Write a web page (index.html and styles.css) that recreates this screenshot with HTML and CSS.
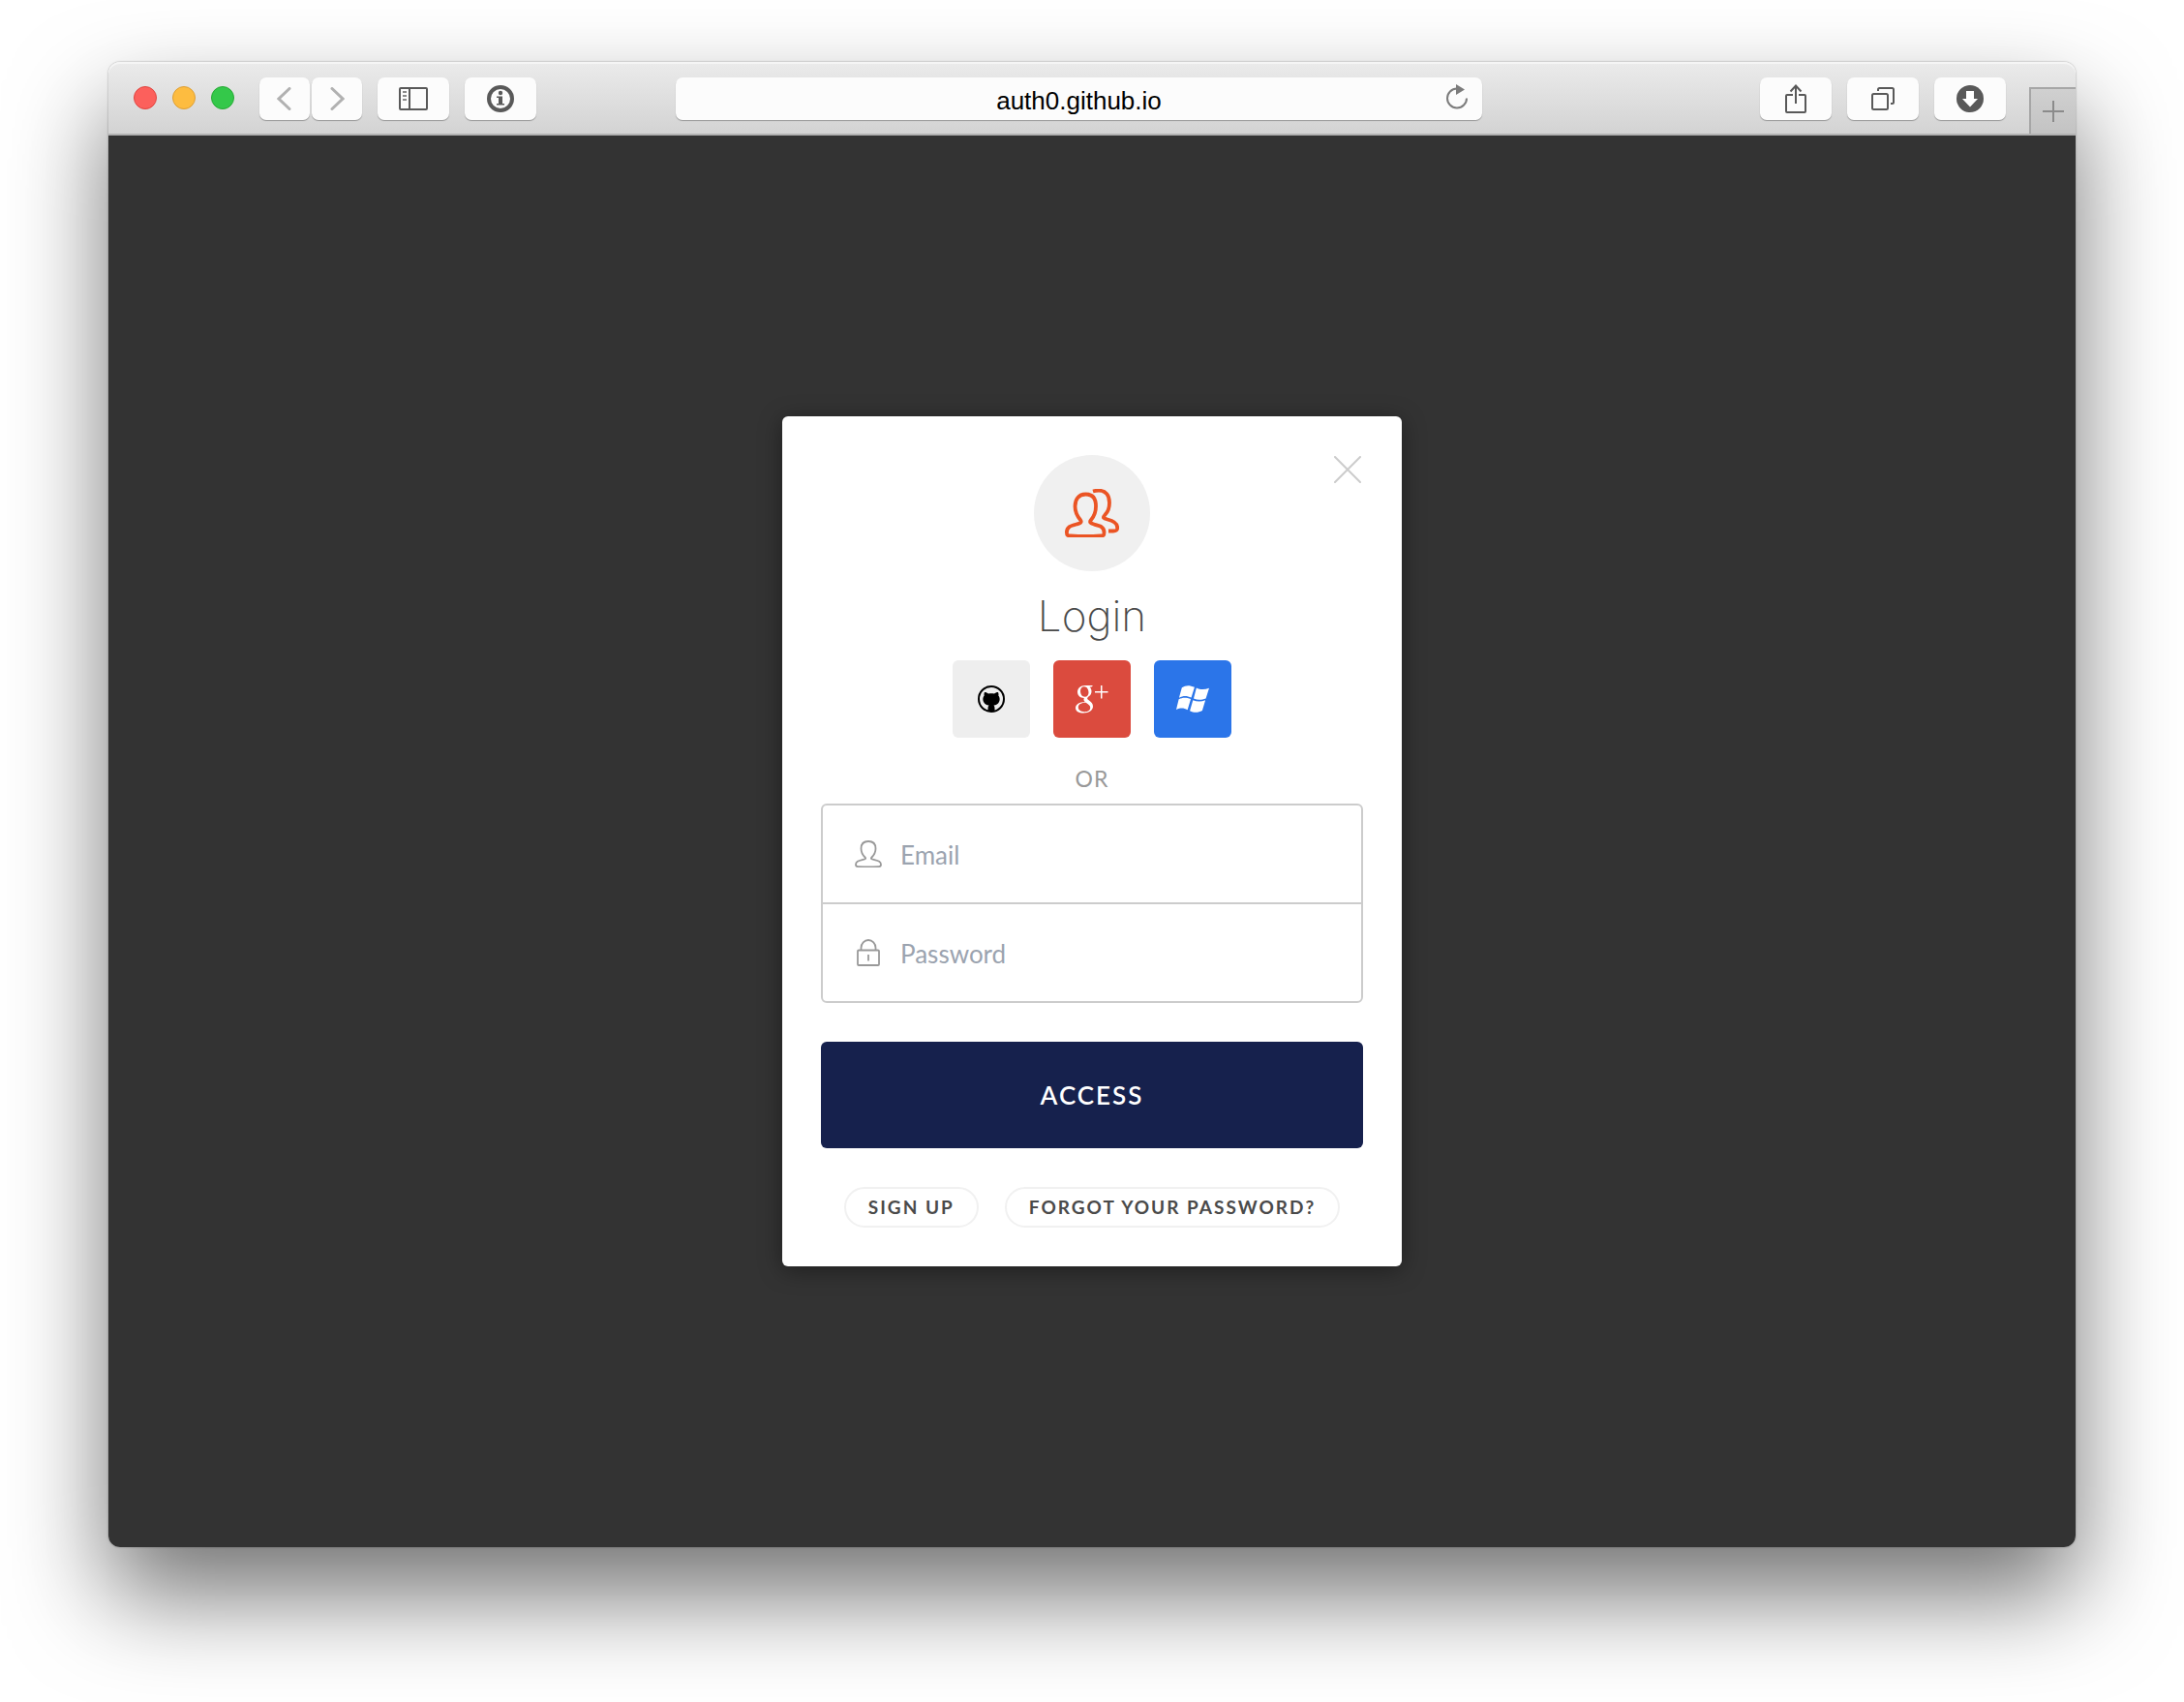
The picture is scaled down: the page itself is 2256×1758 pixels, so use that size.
FILE: index.html
```html
<!DOCTYPE html>
<html lang="en">
<head>
    <meta charset="UTF-8">
    <meta name="viewport" content="width=device-width, initial-scale=1.0">
    <title>Login</title>
    <link rel="stylesheet" href="styles.css">
</head>
<body>
    <div class="window">
        <header class="toolbar">
            <div class="lights">
                <span class="light red"></span>
                <span class="light yellow"></span>
                <span class="light green"></span>
            </div>
            <div class="nav">
                <button class="tool small" type="button" aria-label="Back">
                    <svg width="16" height="24" viewBox="0 0 16 24"><path d="M13 1.500L2 12l11 10.500" fill="none" stroke="#b1b1b1" stroke-width="3" stroke-linecap="round"/></svg>
                </button>
                <button class="tool small" type="button" aria-label="Forward">
                    <svg width="16" height="24" viewBox="0 0 16 24"><path d="M3 1.500L14 12 3 22.500" fill="none" stroke="#b1b1b1" stroke-width="3" stroke-linecap="round"/></svg>
                </button>
            </div>
            <button class="tool" type="button" aria-label="Show sidebar">
                <svg width="30" height="24" viewBox="0 0 30 24" fill="none" stroke="#595959" stroke-width="2"><rect x="1" y="1" width="28" height="22" rx="1"/><path d="M11 1v22"/><path d="M4 5h4M4 9h4M4 13h4" stroke="#8a8a8a"/></svg>
            </button>
            <button class="tool" type="button" aria-label="Info">
                <svg width="28" height="28" viewBox="0 0 28 28"><circle cx="14" cy="14" r="12" fill="none" stroke="#595959" stroke-width="4"/><circle cx="14" cy="8" r="2.200" fill="#595959"/><path d="M10 11.500h6v7.500h2v1.500h-8V19h2v-6h-2z" fill="#595959"/></svg>
            </button>
            <div class="address">
                <input type="text" value="auth0.github.io" aria-label="Address">
                <button class="reload" type="button" aria-label="Reload">
                    <svg width="24" height="28" viewBox="0 0 24 28"><path d="M22 15.500a10 10 0 1 1-10-10" fill="none" stroke="#7c7c7c" stroke-width="2"/><path d="M11 1l9 5.500-9 5.500z" fill="#7c7c7c"/></svg>
                </button>
            </div>
            <button class="tool" type="button" aria-label="Share">
                <svg width="22" height="30" viewBox="0 0 22 30" fill="none" stroke="#595959" stroke-width="2"><path d="M8 11H2a1 1 0 0 0-1 1v16a1 1 0 0 0 1 1h18a1 1 0 0 0 1-1V12a1 1 0 0 0-1-1h-6M11 20V2M5.500 7.500L11 1.500l5.500 6"/></svg>
            </button>
            <button class="tool" type="button" aria-label="Show tabs">
                <svg width="24" height="24" viewBox="0 0 24 24" fill="none" stroke="#595959" stroke-width="2"><rect x="1" y="7" width="16" height="16" rx="1.500"/><path d="M7 4V2.500A1.500 1.500 0 0 1 8.500 1h13A1.500 1.500 0 0 1 23 2.500v13a1.500 1.500 0 0 1-1.500 1.500H20"/></svg>
            </button>
            <button class="tool" type="button" aria-label="Downloads">
                <svg width="28" height="28" viewBox="0 0 28 28"><circle cx="14" cy="14" r="14" fill="#595959"/><path d="M10 6h8v8h4l-8 8.500L6 14h4z" fill="#fff"/></svg>
            </button>
            <button class="new-tab" type="button" aria-label="New tab">
                <svg width="22" height="22" viewBox="0 0 22 22"><path d="M11 0v22M0 11h22" stroke="#8b8b8b" stroke-width="2"/></svg>
            </button>
        </header>

        <main class="page">
            <form class="card">
                <button class="close" type="button" aria-label="Close">
                    <svg width="28" height="28" viewBox="0 0 28 28"><path d="M1 1l26 26M27 1L1 27" stroke="#ccc" stroke-width="2" stroke-linecap="round"/></svg>
                </button>
                <div class="avatar">
                    <svg width="56" height="50" viewBox="0 0 56 50" fill="none" stroke="#eb5424" stroke-width="3.800">
                        <path d="M21.500 5.500C14 5.500 10.500 11 10.500 18c0 7 3 11 5.500 14 2 3-.5 3.500-4 4.500C6 38 1.900 39 1.900 45c0 3 .8 3.300 4 3.500 9 .6 22 .6 31 0 3-.2 3.600-.5 3.600-3.500 0-6-4.300-7-10.500-8.500-3.500-1-5-2-3-4.500 3-3.500 5-7.500 5-14 0-8-3.200-12.500-10.500-12.500z"/>
                        <path d="M29 2.500c2-.6 3.500-.8 6-.8 7.500 0 11 5 11 12.500 0 6-2 10-4.500 12.500-3 3.300-1.500 3.800 2.500 4.800 6 1.500 10.200 3.500 10.200 8.500 0 3-.8 3.500-4.200 3.500h-5"/>
                    </svg>
                </div>
                <h1>Login</h1>
                <div class="social">
                    <button class="github" type="button" aria-label="GitHub">
                        <svg width="28" height="28" viewBox="0 0 28 28"><circle cx="14" cy="14" r="13" fill="none" stroke="#000" stroke-width="2"/><path d="M7 7c1.500 0 3 .6 4 1.500 2-.4 4-.4 6 0 1-.9 2.500-1.500 4-1.500.6 1.300.6 2.600.3 3.600 1.700 2 1.600 4.400.7 6.400-1 2.200-3 3.200-5.500 3.500.8.900 1 2 1 3.500V27h-7v-3c0-1.500.2-2.600 1-3.500-2.500-.3-4.500-1.300-5.500-3.500-.9-2-1-4.400.7-6.400C6.400 9.600 6.400 8.300 7 7z"/></svg>
                    </button>
                    <button class="google" type="button" aria-label="Google+">
                        <svg width="34" height="30" viewBox="0 0 34 30" fill="#fff"><path fill-rule="evenodd" d="M18 1h-8C5 1 2 4 2 7.800 2 11.500 4.800 14 8.800 14c-.7 1.800-.2 2.900 1 4C4 18.200 0 20.500 0 24.200 0 27.500 3.500 29.500 8.200 29.500c6 0 9.800-3 9.800-6.700 0-2.800-1.500-4.300-3.700-6-2.800-2-2.700-2.800-.5-4.500C15.700 10.800 16.500 9.300 16.500 7c0-1.900-.8-3.600-2-4.600h2zM9 2.200c2.800 0 4.500 3 4.500 6 0 2.600-1.400 4.500-3.800 4.500-3 0-4.700-3-4.700-6 0-2.600 1.500-4.500 4-4.500zM10.700 18.800c3.300 2.200 4.500 3.200 4.500 5.200 0 2.500-2.200 4.200-5.800 4.200-4 0-6.600-1.800-6.600-4.600 0-3.300 3.400-4.800 7.900-4.800z"/><path d="M20 7h6V1h1.500v6h6v1.500h-6v6H26v-6h-6z"/></svg>
                    </button>
                    <button class="windows" type="button" aria-label="Windows Live">
                        <svg width="34" height="30" viewBox="0 0 35 30" fill="#fff"><path d="M6 3c4-2.800 8-3 13.500-.5L16 13.500c-5-2.400-9-2-13 .2zM21.500 3.200c4 2 8.500 2 13.500 .3L31.500 14.500c-5 2-9 1.700-13 0zM2.700 15.300c4.500-2.200 8-2 12.800-.2L12 26.500C8 24.300 4.500 24.200 0 26.300zM17.800 16.200c4 1.800 8.500 2 13.200.2L27.700 27.300c-4.500 2.500-9 2.400-13.200 .2z"/></svg>
                    </button>
                </div>
                <p class="or">OR</p>
                <div class="fields">
                    <div class="field">
                        <label for="email" aria-label="Email">
                            <svg width="28" height="28" viewBox="0 0 28 28" fill="none" stroke="#999" stroke-width="1.800"><path d="M14 1C9 1 6.500 4 6.500 8.500c0 4 1.500 6.500 4 9 1.500 1.500 0 2-2 2.400C4 21 1 21.500 1 25c0 1.700.5 2 2 2.100 7 .4 15 .4 22 0 1.500-.1 2-.4 2-2.100 0-3.500-3-4-7.500-5.100-2-.4-3.500-.9-2-2.400 2.500-2.500 4-5 4-9C21.500 4 19 1 14 1z"/></svg>
                        </label>
                        <input type="email" id="email" placeholder="Email">
                    </div>
                    <div class="field">
                        <label for="password" aria-label="Password">
                            <svg width="28" height="28" viewBox="0 0 28 28" fill="none" stroke="#999" stroke-width="1.800"><rect x="3" y="11.500" width="22" height="15.500" rx="1"/><path d="M6.500 11.500V9a7.500 8 0 0 1 15 0v2.500M14 16v6.500"/></svg>
                        </label>
                        <input type="password" id="password" placeholder="Password">
                    </div>
                </div>
                <button class="submit" type="submit">ACCESS</button>
                <div class="links">
                    <a href="#signup">SIGN UP</a>
                    <a href="#reset">FORGOT YOUR PASSWORD?</a>
                </div>
            </form>
        </main>
    </div>
</body>
</html>
```
FILE: styles.css
```css
* {
    box-sizing: border-box;
}

body {
    margin: 0;
    min-height: 100vh;
    padding: 64px 112px 160px;
    display: flex;
    background-color: #fff;
    font-family: Lato, sans-serif;
}

button {
    padding: 0;
    border: none;
    background: none;
    font-family: inherit;
    cursor: pointer;
}

svg {
    display: block;
}

.window {
    flex: 1;
    display: flex;
    flex-direction: column;
    border-radius: 12px;
    box-shadow: 0 0 2px rgba(0, 0, 0, 0.4), 0 50px 100px rgba(0, 0, 0, 0.55);
}

/* browser toolbar */
.toolbar {
    display: flex;
    align-items: center;
    gap: 16px;
    height: 76px;
    padding-top: 2px;
    padding-left: 26px;
    border-bottom: 2px solid #b1b1b1;
    border-radius: 12px 12px 0 0;
    background: linear-gradient(#ebebeb, #d3d3d3);
    box-shadow: inset 0 2px 0 #f5f5f5;
}

.lights {
    display: flex;
    gap: 16px;
    margin-right: 10px;
    padding-bottom: 2px;
}

.light {
    width: 24px;
    height: 24px;
    border-radius: 50%;
    border: 1px solid;
}

.red {
    background-color: #fc605c;
    border-color: #e0443f;
}

.yellow {
    background-color: #fdbc40;
    border-color: #de9f34;
}

.green {
    background-color: #34c84a;
    border-color: #27aa35;
}

.nav {
    display: flex;
    gap: 2px;
}

.tool {
    display: flex;
    align-items: center;
    justify-content: center;
    width: 74px;
    height: 44px;
    border-radius: 7px;
    background-color: #fcfcfc;
    box-shadow: 0 1px 1px rgba(0, 0, 0, 0.3);
}

.small {
    width: 52px;
}

.address {
    position: relative;
    flex: 1;
    margin: 0 271px 0 128px;
}

.address input {
    display: block;
    width: 100%;
    height: 44px;
    padding: 4px 40px 0;
    border: none;
    border-radius: 7px;
    background-color: #fcfcfc;
    box-shadow: 0 1px 1px rgba(0, 0, 0, 0.3);
    font-family: "Liberation Sans", sans-serif;
    font-size: 26px;
    text-align: center;
    color: #000;
}

.reload {
    position: absolute;
    top: 6px;
    right: 14px;
}

.new-tab {
    display: flex;
    align-items: center;
    justify-content: center;
    align-self: flex-end;
    width: 48px;
    height: 48px;
    margin-left: 8px;
    border-top: 2px solid #a6a6a6;
    border-left: 2px solid #a6a6a6;
    background: linear-gradient(#d0d0d0, #c3c3c3);
}

/* page content */
.page {
    flex: 1;
    display: flex;
    align-items: center;
    justify-content: center;
    border-radius: 0 0 12px 12px;
    background-color: #333;
}

.card {
    position: relative;
    width: 640px;
    padding: 40px;
    border-radius: 6px;
    background-color: #fff;
    box-shadow: 0 4px 24px rgba(0, 0, 0, 0.4);
}

.close {
    position: absolute;
    top: 41px;
    right: 42px;
}

.avatar {
    display: flex;
    align-items: center;
    justify-content: center;
    width: 120px;
    height: 120px;
    margin: 0 auto;
    border-radius: 50%;
    background-color: #f0f0f0;
}

h1 {
    margin: 16px 0;
    font-family: Inter, sans-serif;
    font-size: 44px;
    font-weight: 200;
    line-height: 60px;
    text-align: center;
    color: #4a4a4a;
}

.social {
    display: flex;
    justify-content: center;
    gap: 24px;
}

.social button {
    display: flex;
    align-items: center;
    justify-content: center;
    width: 80px;
    height: 80px;
    border-radius: 6px;
}

.github {
    background-color: #eee;
}

.google {
    background-color: #db4b3e;
}

.windows {
    background-color: #2b75e9;
}

.or {
    margin: 28px 0 12px;
    font-size: 23px;
    line-height: 28px;
    letter-spacing: 1px;
    text-align: center;
    color: #999;
}

.fields {
    border: 2px solid #ccc;
    border-radius: 6px;
}

.field {
    display: flex;
    align-items: center;
    height: 100px;
    padding: 0 33px;
}

.field + .field {
    height: 102px;
    border-top: 2px solid #ccc;
}

.field input {
    flex: 1;
    height: 60px;
    padding: 2px 0 0 19px;
    border: none;
    outline: none;
    background: none;
    font-family: inherit;
    font-size: 26px;
    color: #333;
}

.field input::placeholder {
    color: #9ba3af;
}

.submit {
    display: block;
    width: 100%;
    height: 110px;
    margin: 40px 0;
    border-radius: 6px;
    background-color: #16214d;
    font-size: 26px;
    font-weight: 600;
    letter-spacing: 2px;
    color: #fff;
}

.links {
    display: flex;
    justify-content: center;
    gap: 27px;
}

.links a {
    padding: 0 23px;
    border: 2px solid #f1f1f1;
    border-radius: 21px;
    font-size: 19px;
    font-weight: 700;
    line-height: 38px;
    letter-spacing: 2px;
    text-decoration: none;
    color: #4a4a4a;
}
```
